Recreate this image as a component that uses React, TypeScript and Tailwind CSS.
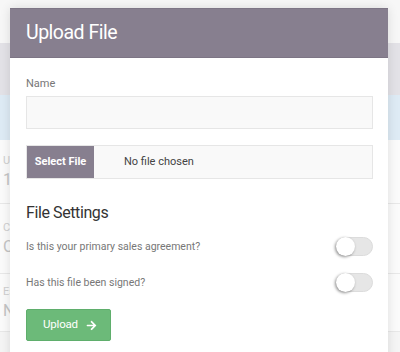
import React from "react";
import { FaArrowRight } from "react-icons/fa";

function Toggle() {
  return (
    <div className="relative h-[19px] w-[37px] rounded-full border border-[#dcdcdc] bg-[#e6e6e6]">
      <div className="absolute left-[-1px] top-[-1px] h-[19px] w-[19px] rounded-full bg-white shadow-[-1px_1px_3px_rgba(0,0,0,0.45)]" />
    </div>
  );
}

export default function App() {
  return (
    <div
      className="relative h-[352px] w-[400px] overflow-hidden bg-[#f5f5f5]"
      style={{ fontFamily: "Roboto, 'Liberation Sans', sans-serif" }}
    >
      {/* background page */}
      <div className="flex flex-col">
        <div className="h-[43px] bg-[#f7f7f7]" />
        <div className="h-[52px] bg-[#e3e2e7]" />
        <div className="h-[45px] bg-[#deebf5]" />
        <div className="flex h-[64px] flex-col justify-center gap-[4px] border-b border-[#e8e8e8] bg-[#fbfbfb] pl-[3px]">
          <span className="text-[11px] leading-[12px] text-[#cfcfcf]">Ur</span>
          <span className="text-[16px] leading-[18px] text-[#c4c4c4]">1:</span>
        </div>
        <div className="flex h-[70px] flex-col justify-center gap-[4px] border-b border-[#e8e8e8] bg-[#fbfbfb] pl-[3px]">
          <span className="text-[11px] leading-[12px] text-[#cfcfcf]">Co</span>
          <span className="text-[16px] leading-[18px] text-[#c4c4c4]">O</span>
        </div>
        <div className="flex h-[58px] flex-col justify-center gap-[4px] border-b border-[#e8e8e8] bg-[#fbfbfb] pl-[3px]">
          <span className="text-[11px] leading-[12px] text-[#cfcfcf]">Es</span>
          <span className="text-[16px] leading-[18px] text-[#c4c4c4]">N</span>
        </div>
      </div>

      {/* modal */}
      <div className="absolute left-[10px] top-[8px] h-[400px] w-[378px] bg-white shadow-[0_0_10px_rgba(0,0,0,0.12)]">
        <div className="flex h-[50px] items-center border-b border-t border-[#7d7585] bg-[#877f8f] pl-4">
          <span className="text-[19.5px] font-normal tracking-[-0.5px] text-white">Upload File</span>
        </div>
        <div className="flex flex-col pl-4 pr-[15px] pt-[18px]">
          <label className="text-[11px] leading-[16px] text-[#777]">Name</label>
          <div className="mt-[4px] h-[33px] border border-[#e6e6e6] bg-[#f9f9f9]" />
          <div className="mt-[16px] flex h-[34px] items-stretch border border-[#e6e6e6] bg-[#f9f9f9]">
            <div className="flex w-[67px] items-center justify-center bg-[#877f8f] text-[11px] font-bold text-white">
              Select File
            </div>
            <div className="flex items-center pl-[30px] text-[11px] text-[#444]">No file chosen</div>
          </div>
          <h3 className="mt-[23px] h-[22px] text-[16px] leading-[22px] tracking-[-0.4px] text-[#333]">File Settings</h3>
          <div className="mt-[13px] flex h-[19px] items-center justify-between">
            <span className="text-[10.5px] text-[#777]">Is this your primary sales agreement?</span>
            <Toggle />
          </div>
          <div className="mt-[17px] flex h-[19px] items-center justify-between">
            <span className="text-[10.5px] text-[#777]">Has this file been signed?</span>
            <Toggle />
          </div>
          <button className="mt-[17px] flex h-[32px] w-[85px] items-center justify-center gap-[8px] rounded-[2px] border border-[#5fae6c] bg-[#6cba79] pl-[3px] text-[11.5px] tracking-[-0.2px] text-white">
            <span>Upload</span>
            <FaArrowRight className="h-[11px] w-[11px]" />
          </button>
        </div>
      </div>
    </div>
  );
}
